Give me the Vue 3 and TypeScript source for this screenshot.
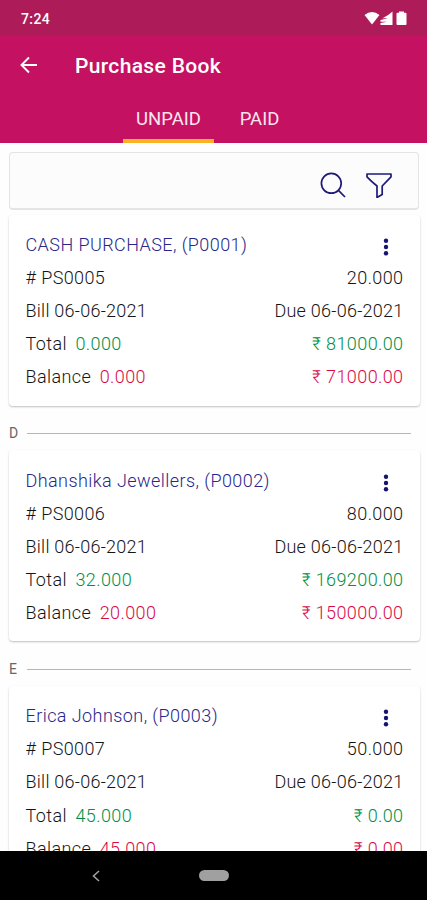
<script setup lang="ts">
interface Bill {
  group?: string
  party: string
  number: string
  quantity: string
  billDate: string
  dueDate: string
  totalWeight: string
  totalAmount: string
  balanceWeight: string
  balanceAmount: string
}

const bills: Bill[] = [
  {
    party: 'CASH PURCHASE, (P0001)',
    number: 'PS0005',
    quantity: '20.000',
    billDate: '06-06-2021',
    dueDate: '06-06-2021',
    totalWeight: '0.000',
    totalAmount: '81000.00',
    balanceWeight: '0.000',
    balanceAmount: '71000.00',
  },
  {
    group: 'D',
    party: 'Dhanshika Jewellers, (P0002)',
    number: 'PS0006',
    quantity: '80.000',
    billDate: '06-06-2021',
    dueDate: '06-06-2021',
    totalWeight: '32.000',
    totalAmount: '169200.00',
    balanceWeight: '20.000',
    balanceAmount: '150000.00',
  },
  {
    group: 'E',
    party: 'Erica Johnson, (P0003)',
    number: 'PS0007',
    quantity: '50.000',
    billDate: '06-06-2021',
    dueDate: '06-06-2021',
    totalWeight: '45.000',
    totalAmount: '0.00',
    balanceWeight: '45.000',
    balanceAmount: '0.00',
  },
]
</script>

<template>
  <div class="screen">
    <div class="status">
      <span>7:24</span>
      <svg class="status-icons" viewBox="0 0 44 16" width="44" height="16" fill="#fff">
        <path d="M0.5 4Q8 -2 15.500 4L8 13.500Z" />
        <path d="M28.500 0.500V14H16.500V12L23 10.800H16.500V9L24 7.200H18.500Q25 4 28.500 0.500Z" />
        <path d="M35 0.500h5v1.200h1.500q1 0 1 1V13q0 1-1 1h-8q-1 0-1-1V2.700q0-1 1-1h1.500z" />
      </svg>
    </div>
    <header class="header">
      <div class="bar">
        <svg class="back" viewBox="0 0 18 18" width="18" height="18" fill="none" stroke="#fff" stroke-width="1.9">
          <path d="M17 9H2M9 1.500L1.500 9L9 16.500" />
        </svg>
        <h1 class="title">Purchase Book</h1>
      </div>
      <nav class="tabs">
        <span class="tab active">UNPAID</span>
        <span class="tab">PAID</span>
      </nav>
    </header>
    <main class="content">
      <div class="search">
        <svg viewBox="0 0 26 26" width="26" height="26" fill="none" stroke="#1d1a78" stroke-width="1.7">
          <circle cx="11.300" cy="11.300" r="9.900" />
          <path d="M18.200 18.200L25 25" />
        </svg>
        <svg viewBox="0 0 26 26" width="26" height="26" fill="none" stroke="#1d1a78" stroke-width="1.7" stroke-linejoin="round">
          <path d="M1 2H25V4.800Q20 10 16.200 14V22.500L11 25.500V14Q6 10 1 4.800Z" />
        </svg>
      </div>
      <section v-for="bill in bills" :key="bill.number">
        <div v-if="bill.group" class="divider">
          <span class="letter">{{ bill.group }}</span>
          <span class="rule"></span>
        </div>
        <article class="card">
          <div class="row party">
            <span>{{ bill.party }}</span>
            <svg class="more" viewBox="0 0 6 18" width="6" height="18" fill="#17146f">
              <circle cx="3" cy="2.700" r="2.200" />
              <circle cx="3" cy="9" r="2.200" />
              <circle cx="3" cy="15.300" r="2.200" />
            </svg>
          </div>
          <div class="row"><span># {{ bill.number }}</span><span>{{ bill.quantity }}</span></div>
          <div class="row dates"><span>Bill {{ bill.billDate }}</span><span>Due {{ bill.dueDate }}</span></div>
          <div class="row">
            <span>Total<span class="weight green">{{ bill.totalWeight }}</span></span>
            <span class="green">₹ {{ bill.totalAmount }}</span>
          </div>
          <div class="row">
            <span>Balance<span class="weight red">{{ bill.balanceWeight }}</span></span>
            <span class="red">₹ {{ bill.balanceAmount }}</span>
          </div>
        </article>
      </section>
    </main>
    <footer class="navbar">
      <svg class="nav-back" viewBox="0 0 8 12" width="8" height="12" fill="none" stroke="#a0a0a0" stroke-width="1.6">
        <path d="M7 1L1.500 6L7 11" />
      </svg>
      <span class="pill"></span>
    </footer>
  </div>
</template>

<style>
body {
  margin: 0;
  overflow: hidden;
}
</style>

<style scoped>
.screen {
  display: flex;
  flex-direction: column;
  height: 900px;
  overflow: hidden;
  background: #fefefe;
  font-family: Roboto, 'Noto Sans', sans-serif;
  color: #151515;
}
.status {
  flex: none;
  display: flex;
  justify-content: space-between;
  align-items: center;
  box-sizing: border-box;
  height: 36px;
  padding: 1px 19px 0 21px;
  background: #ad1c58;
  color: #fff;
  font-size: 14px;
  font-weight: 500;
  letter-spacing: 0.4px;
}
.header {
  flex: none;
  height: 107px;
  background: #c51162;
  color: #fff;
}
.bar {
  display: flex;
  align-items: center;
  height: 57px;
  padding-left: 20px;
}
.title {
  margin: 2px 0 0 37px;
  font-size: 21px;
  font-weight: 500;
  letter-spacing: 0.35px;
}
.tabs {
  display: flex;
  height: 50px;
  padding-left: 123px;
}
.tab {
  box-sizing: border-box;
  width: 91px;
  border-bottom: 4px solid transparent;
  text-align: center;
  font-size: 18.500px;
  line-height: 53px;
  color: #fbe6ef;
}
.tab.active {
  border-color: #fbb325;
}
.content {
  flex: 1;
  min-height: 0;
  overflow: hidden;
  padding: 9px 7px 0 9px;
}
.search {
  display: flex;
  justify-content: flex-end;
  align-items: center;
  gap: 20px;
  box-sizing: border-box;
  height: 58px;
  margin: 0 1px 4.500px 0;
  padding: 8px 26px 0 0;
  border: 1px solid #e3e4e5;
  border-bottom-width: 2px;
  border-radius: 4px;
  background: #fcfcfc;
}
.card {
  box-sizing: border-box;
  height: 191px;
  padding: 13.400px 16.500px 0;
  border-radius: 4px;
  background: #fff;
  box-shadow: 0 1px 2px rgba(0, 0, 0, 0.25);
}
.row {
  display: flex;
  justify-content: space-between;
  height: 33.100px;
  line-height: 33.100px;
  font-size: 18px;
  font-weight: 300;
  letter-spacing: 0.400px;
  white-space: pre;
}
.dates {
  letter-spacing: 0.250px;
}
.party {
  color: #292789;
  letter-spacing: 0.430px;
}
.more {
  margin: 10px 15px 0 0;
}
.weight {
  margin-left: 8.500px;
}
.green {
  color: #008f45;
}
.red {
  color: #d90b4b;
}
.divider {
  display: flex;
  align-items: center;
  height: 44.700px;
  padding: 11px 9px 0 0;
  box-sizing: border-box;
}
.letter {
  width: 18px;
  font-size: 14px;
  color: #666;
}
.rule {
  flex: 1;
  height: 1px;
  background: #b5b5b5;
}
.navbar {
  flex: none;
  display: flex;
  align-items: center;
  height: 49px;
  background: #000;
}
.nav-back {
  margin-left: 92px;
}
.pill {
  width: 30px;
  height: 11px;
  margin-left: 99px;
  border-radius: 6px;
  background: #a0a0a0;
}
</style>
